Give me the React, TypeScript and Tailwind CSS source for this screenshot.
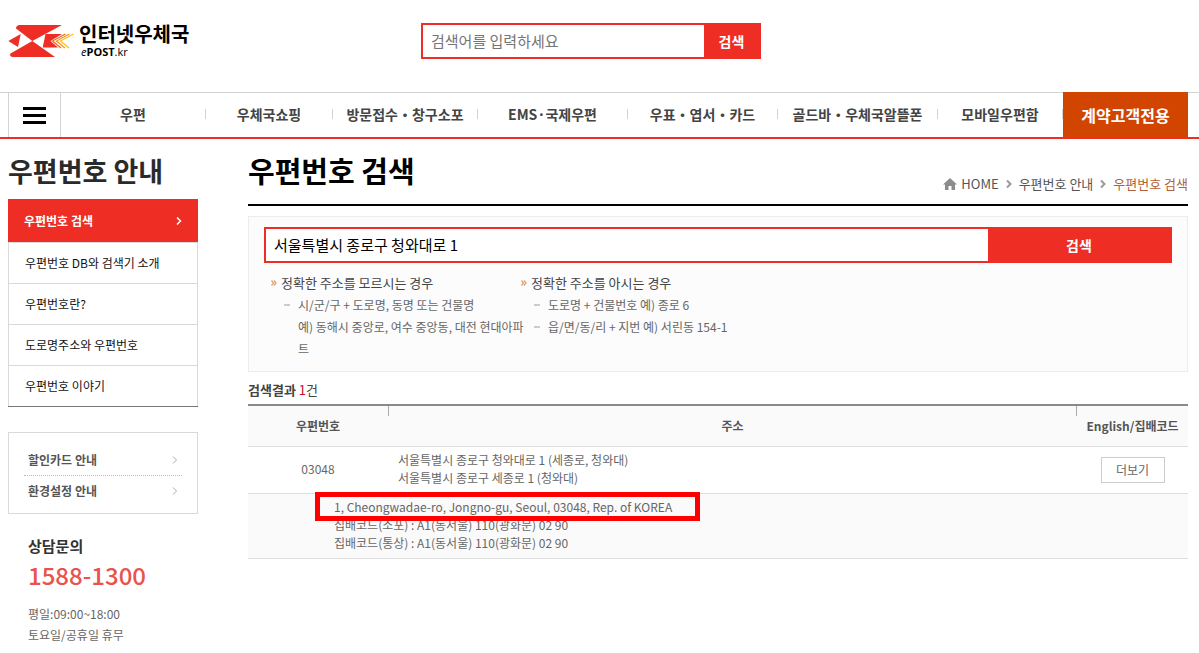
import { useState } from "react";

interface NavItem {
  label: string;
  href: string;
}

const NAV_ITEMS: NavItem[] = [
  { label: "우편", href: "#post" },
  { label: "우체국쇼핑", href: "#mall" },
  { label: "방문접수・창구소포", href: "#parcel" },
  { label: "EMS·국제우편", href: "#ems" },
  { label: "우표・엽서・카드", href: "#stamp" },
  { label: "골드바・우체국알뜰폰", href: "#gold" },
  { label: "모바일우편함", href: "#mobile" },
];

const SIDE_ITEMS: NavItem[] = [
  { label: "우편번호 DB와 검색기 소개", href: "#db" },
  { label: "우편번호란?", href: "#about" },
  { label: "도로명주소와 우편번호", href: "#road" },
  { label: "우편번호 이야기", href: "#story" },
];

const QUICK_LINKS: NavItem[] = [
  { label: "할인카드 안내", href: "#card" },
  { label: "환경설정 안내", href: "#settings" },
];

function Chevron({ className }: { className?: string }) {
  return (
    <svg className={className} viewBox="0 0 6 8" fill="none" stroke="currentColor" aria-hidden="true">
      <path d="M1 0.5L4.5 4L1 7.5" />
    </svg>
  );
}

function Logo() {
  return (
    <a href="#home" className="flex items-center gap-1 text-black">
      <svg className="h-[34px] w-[67px]" viewBox="0 0 67 34" aria-hidden="true">
        <g fill="#ee2e24">
          <path d="M11 1H54L24.300 17L8 4.500Q8 1.500 11 1Z" />
          <path d="M24.300 17L47 33H4.500Q1 32 2.500 29.500Z" />
          <path d="M0.300 17L12.700 10L10 23Z" />
          <path d="M37.500 10H54L42.500 17L50 23.500H34.700Z" />
        </g>
        <g fill="none" strokeWidth="1.300">
          <path d="M57.500 10L44.500 17L53 24" stroke="#f26a21" />
          <path d="M61.500 10L48.500 17L57 24" stroke="#f7941d" />
          <path d="M65.500 10L52.500 17L61 24" stroke="#fdc116" />
        </g>
      </svg>
      <span className="flex flex-col">
        <span className="text-[20px] leading-[22px] font-bold">인터넷우체국</span>
        <span className="pl-[2px] font-['Open_Sans',sans-serif] text-[11px] leading-[14px]">
          <i>e</i>
          <b>POST</b>.kr
        </span>
      </span>
    </a>
  );
}

function Header() {
  return (
    <header>
      <div className="grid grid-cols-[1fr_340px_1fr] items-center pt-[23px] pr-[25px] pb-[33px] pl-2">
        <Logo />
        <form className="flex h-9 border-2 border-[#ee2e24]" onSubmit={(e) => e.preventDefault()}>
          <input
            type="text"
            aria-label="검색어를 입력하세요"
            placeholder="검색어를 입력하세요"
            className="min-w-0 flex-1 px-2 text-[15px] outline-none placeholder:text-[#757575]"
          />
          <button type="submit" className="w-[55px] bg-[#ee2e24] text-[14px] font-bold text-white">
            검색
          </button>
        </form>
      </div>

      <nav className="flex h-[47px] border-t border-b-2 border-t-[#d3d3d3] border-b-[#ee2e24] pr-[11px] pl-2">
        <button
          type="button"
          aria-label="전체메뉴"
          className="flex w-[53px] flex-col items-center justify-center gap-1 border-x border-[#d3d3d3]"
        >
          <span className="h-[3px] w-[23px] bg-black" />
          <span className="h-[3px] w-[23px] bg-black" />
          <span className="h-[3px] w-[23px] bg-black" />
        </button>
        <ul className="grid flex-1 grid-cols-[145fr_127fr_145fr_150fr_150fr_160fr_125fr] items-center pb-[2px]">
          {NAV_ITEMS.map((item) => (
            <li key={item.label} className="flex h-[10px] items-center justify-center border-r border-[#d3d3d3]">
              <a href={item.href} className="text-[14px] font-bold whitespace-nowrap text-[#444]">
                {item.label}
              </a>
            </li>
          ))}
        </ul>
        <a
          href="#contract"
          className="-mt-px flex w-[125px] items-center justify-center bg-[#d14500] text-[16px] font-bold text-white"
        >
          계약고객전용
        </a>
      </nav>
    </header>
  );
}

function Sidebar() {
  return (
    <aside className="w-[190px] shrink-0">
      <h2 className="pt-[14px] pb-[10px] text-[27px] leading-9 font-bold text-[#2a2a2a]">우편번호 안내</h2>
      <ul className="border-b border-[#777] text-[12px] text-[#111]">
        <li>
          <a
            href="#search"
            className="flex h-[43px] items-center justify-between bg-[#ee2e24] px-4 font-bold text-white"
          >
            우편번호 검색
            <Chevron className="h-2 w-[6px] stroke-[1.5]" />
          </a>
        </li>
        {SIDE_ITEMS.map((item) => (
          <li key={item.label} className="border-x border-t border-[#d9d9d9]">
            <a href={item.href} className="flex h-10 items-center px-4">
              {item.label}
            </a>
          </li>
        ))}
      </ul>

      <ul className="mt-[25px] border border-[#d9d9d9] px-[15px] pt-3 pb-[7px] text-[12px] font-bold text-[#555]">
        {QUICK_LINKS.map((item) => (
          <li key={item.label} className="border-b border-dotted border-[#bbb] last:border-b-0">
            <a href={item.href} className="flex h-[30px] items-center justify-between px-1">
              {item.label}
              <Chevron className="h-2 w-[6px] text-[#aaa]" />
            </a>
          </li>
        ))}
      </ul>

      <div className="px-5 pt-5 text-[12px] leading-[21px] text-[#666]">
        <h3 className="text-[15px] leading-6 font-bold text-[#333]">상담문의</h3>
        <p className="mb-[11px] text-[24px] leading-[34px] font-medium text-[#e9534d]">1588-1300</p>
        <p>평일:09:00~18:00</p>
        <p>토요일/공휴일 휴무</p>
      </div>
    </aside>
  );
}

function HintTitle({ children }: { children: string }) {
  return (
    <h3 className="flex items-center gap-1 text-[13px] leading-[22px] text-[#444]">
      <svg
        className="h-[6px] w-[6px]"
        viewBox="0 0 6 6"
        fill="none"
        stroke="#dca378"
        strokeWidth="1.300"
        aria-hidden="true"
      >
        <path d="M0.500 0.500L2.500 3L0.500 5.500M3 0.500L5 3L3 5.500" />
      </svg>
      {children}
    </h3>
  );
}

function HintLine({ children }: { children: React.ReactNode }) {
  return (
    <li className="flex gap-2 pl-[13px] whitespace-nowrap">
      <span className="mt-[10px] h-[2px] w-[6px] shrink-0 bg-[#ccc]" />
      <span>{children}</span>
    </li>
  );
}

function SearchBox() {
  const [keyword, setKeyword] = useState("서울특별시 종로구 청와대로 1");

  return (
    <section className="mt-[10px] border border-[#ececec] bg-[#fcfcfc] px-[15px] pt-[10px] pb-[11px]">
      <form className="flex h-9 border-2 border-[#ee2e24] bg-white" onSubmit={(e) => e.preventDefault()}>
        <input
          type="text"
          aria-label="우편번호 검색"
          value={keyword}
          onChange={(e) => setKeyword(e.target.value)}
          className="min-w-0 flex-1 px-2 text-[15px] text-black outline-none"
        />
        <button type="submit" className="w-[182px] bg-[#ee2e24] text-[14px] font-bold text-white">
          검색
        </button>
      </form>
      <div className="flex pt-[9px] pl-[7px] text-[12px] leading-[22px] text-[#666]">
        <div className="w-[250px]">
          <HintTitle>정확한 주소를 모르시는 경우</HintTitle>
          <ul>
            <HintLine>
              시/군/구 + 도로명, 동명 또는 건물명
              <br />
              예) 동해시 중앙로, 여수 중앙동, 대전 현대아파
              <br />트
            </HintLine>
          </ul>
        </div>
        <div>
          <HintTitle>정확한 주소를 아시는 경우</HintTitle>
          <ul>
            <HintLine>도로명 + 건물번호 예) 종로 6</HintLine>
            <HintLine>읍/면/동/리 + 지번 예) 서린동 154-1</HintLine>
          </ul>
        </div>
      </div>
    </section>
  );
}

function Results() {
  return (
    <section className="pt-[6px]">
      <p className="pb-[2px] text-[13px] leading-6 text-[#444]">
        <b>검색결과</b> <span className="text-[#c8102e]">1</span>건
      </p>
      <table className="w-full table-fixed border-collapse text-[12px] leading-[18px] text-[#666]">
        <colgroup>
          <col className="w-[140px]" />
          <col />
          <col className="w-[111px]" />
        </colgroup>
        <thead>
          <tr className="h-[41px] border-t-2 border-b border-t-[#888b88] border-b-[#dedede] bg-[#fafafa] text-[#555]">
            <th scope="col">우편번호</th>
            <th scope="col" className="relative">
              <span className="absolute top-0 left-0 h-[10px] w-px bg-[#aaa]" />
              주소
              <span className="absolute top-0 right-0 h-[10px] w-px bg-[#aaa]" />
            </th>
            <th scope="col">English/집배코드</th>
          </tr>
        </thead>
        <tbody>
          <tr className="h-[47px] border-b border-[#dedede]">
            <td className="pb-[2px] text-center">03048</td>
            <td className="px-[10px] pb-[2px]">
              서울특별시 종로구 청와대로 1 (세종로, 청와대)
              <br />
              서울특별시 종로구 세종로 1 (청와대)
            </td>
            <td className="text-center">
              <button type="button" className="h-[26px] w-16 border border-[#ccc] bg-white">
                더보기
              </button>
            </td>
          </tr>
          <tr className="h-[65px] border-b border-[#dedede] bg-[#fafafa]">
            <td colSpan={3} className="relative pb-[2px] pl-[86px]">
              <span className="absolute -top-[2px] left-[67px] h-[29px] w-[385px] border-[5px] border-[#fe0000]" />
              <p>1, Cheongwadae-ro, Jongno-gu, Seoul, 03048, Rep. of KOREA</p>
              <p>집배코드(소포) : A1(동서울) 110(광화문) 02 90</p>
              <p>집배코드(통상) : A1(동서울) 110(광화문) 02 90</p>
            </td>
          </tr>
        </tbody>
      </table>
    </section>
  );
}

export default function App() {
  return (
    <div className="min-h-screen bg-white font-['Noto_Sans_CJK_KR',sans-serif]">
      <Header />
      <div className="flex gap-[50px] pr-[11px] pl-2">
        <Sidebar />
        <main className="min-w-0 flex-1">
          <div className="flex items-end justify-between border-b-2 border-black pt-[13px] pb-2">
            <h1 className="pb-2 text-[29px] leading-9 font-bold text-black">우편번호 검색</h1>
            <ol className="flex items-center gap-[7px] text-[13px] leading-6 text-[#555]">
              <li>
                <a href="#home" className="flex items-center gap-1">
                  <svg className="h-3 w-[14px]" viewBox="0 0 14 12" fill="#8c8c8c" aria-hidden="true">
                    <path d="M7 0L14 6.500H12V12H8.500V8H5.500V12H2V6.500H0Z" />
                  </svg>
                  HOME
                </a>
              </li>
              <li>
                <Chevron className="h-2 w-[6px] stroke-2 text-[#999]" />
              </li>
              <li>
                <a href="#info">우편번호 안내</a>
              </li>
              <li>
                <Chevron className="h-2 w-[6px] stroke-2 text-[#999]" />
              </li>
              <li className="text-[#b0603a]">우편번호 검색</li>
            </ol>
          </div>
          <SearchBox />
          <Results />
        </main>
      </div>
    </div>
  );
}
